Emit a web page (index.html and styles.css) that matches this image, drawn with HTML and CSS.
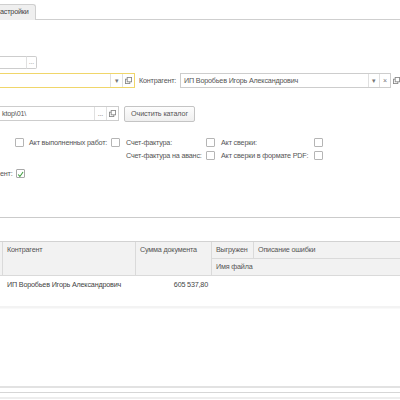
FILE: index.html
```html
<!DOCTYPE html>
<html lang="ru">
  <head>
    <meta charset="UTF-8" />
    <title>Выгрузка документов</title>
    <link rel="stylesheet" href="styles.css">
  </head>
  <body>
    <div class="tabbar">
      <div class="tab">астройки</div>
    </div>

    <div class="form">
      <div class="row row-1">
        <div class="field w-path-short"><span class="val"></span></div>
        <div class="btn-side">...</div>
      </div>

      <div class="row row-2">
        <div class="field field-active w-org">
          <span class="val"></span>
          <span class="fbtn">&#9662;</span>
          <span class="fbtn"><svg viewBox="0 0 8 8" width="7" height="7"><rect x="0.5" y="2.5" width="5" height="5" fill="none" stroke="#888"/><rect x="2.5" y="0.5" width="5" height="5" fill="#fff" stroke="#888"/></svg></span>
        </div>
        <span class="label label-k">Контрагент:</span>
        <div class="field w-kontr">
          <span class="val">ИП Воробьев Игорь Александрович</span>
          <span class="fbtn">&#9662;</span>
          <span class="fbtn">&times;</span>
        </div>
        <span class="open-icon"><svg viewBox="0 0 8 8" width="7" height="7"><rect x="0.5" y="2.5" width="5" height="5" fill="none" stroke="#888"/><rect x="2.5" y="0.5" width="5" height="5" fill="#fff" stroke="#888"/></svg></span>
      </div>

      <div class="row row-3">
        <div class="field w-path">
          <span class="val">ktop\01\</span>
          <span class="fbtn">...</span>
          <span class="fbtn"><svg viewBox="0 0 8 8" width="7" height="7"><rect x="0.5" y="2.5" width="5" height="5" fill="none" stroke="#888"/><rect x="2.5" y="0.5" width="5" height="5" fill="#fff" stroke="#888"/></svg></span>
        </div>
        <button class="btn">Очистить каталог</button>
      </div>

      <div class="checks">
        <div class="check-row">
          <span class="cb cb-first"></span>
          <span class="cl cl-akt">Акт выполненных работ:</span>
          <span class="cb"></span>
          <span class="cl cl-sf">Счет-фактура:</span>
          <span class="cb"></span>
          <span class="cl cl-sv">Акт сверки:</span>
          <span class="cb"></span>
        </div>
        <div class="check-row check-row-2">
          <span class="cl cl-sf">Счет-фактура на аванс:</span>
          <span class="cb"></span>
          <span class="cl cl-sv">Акт сверки в формате PDF:</span>
          <span class="cb"></span>
        </div>
        <div class="check-row check-row-3">
          <span class="cl">ент:</span>
          <span class="cb checked"><svg viewBox="0 0 9 9" width="9" height="9"><path d="M1.5 4.5 L3.7 7 L7.8 1.2" fill="none" stroke="#3a9a3a" stroke-width="1.3"/></svg></span>
        </div>
      </div>
    </div>

    <div class="divider"></div>

    <div class="grid">
      <div class="gh gh-lead"></div>
      <div class="gh gh-kontr">Контрагент</div>
      <div class="gh gh-sum">Сумма документа</div>
      <div class="gh">Выгружен</div>
      <div class="gh gh-err">Описание ошибки</div>
      <div class="gh gh-file">Имя файла</div>

      <div class="gc"></div>
      <div class="gc">ИП Воробьев Игорь Александрович</div>
      <div class="gc gc-num">605 537,80</div>
      <div class="gc gc-rest"></div>
    </div>

    <div class="grid-bottom"></div>

    <div class="footer">
      <div class="fline fline-1"></div>
      <div class="fline fline-2"></div>
      <div class="fline fline-3"></div>
    </div>
  </body>
</html>
```

FILE: styles.css
```css
* {
  box-sizing: border-box;
}

body {
  margin: 0;
  width: 400px;
  height: 400px;
  overflow: hidden;
  background: #fff;
  font-family: "Liberation Sans", Arial, sans-serif;
  font-size: 7.2px;
  letter-spacing: -0.18px;
  color: #555;
}

/* tabs */

.tabbar {
  height: 20px;
  padding-top: 4px;
  border-bottom: 1px solid #cfcfcf;
  display: flex;
}

.tab {
  width: 36px;
  height: 16px;
  line-height: 14px;
  background: #efefef;
  border: 1px solid #cfcfcf;
  border-left: none;
  border-bottom: none;
  border-radius: 0 3px 0 0;
  color: #444;
}

/* form */

.form {
  padding-top: 36px;
}

.row {
  display: flex;
  align-items: center;
  white-space: nowrap;
}

.row-1 {
  height: 13px;
}

.row-2 {
  margin-top: 4px;
  height: 15px;
}

.row-3 {
  margin-top: 18px;
  height: 15px;
}

.field {
  display: flex;
  height: 100%;
  border: 1px solid #cdcdcd;
  background: #fff;
  margin-left: -2px;
}

.field .val {
  flex: 1;
  padding-left: 3px;
  line-height: 13px;
  white-space: nowrap;
  overflow: hidden;
}

.fbtn {
  width: 12px;
  border-left: 1px solid #e0e0e0;
  display: flex;
  align-items: center;
  justify-content: center;
  color: #777;
  font-size: 7px;
}

.field-active {
  border-color: #f0d66a;
}

.w-path-short {
  width: 29px;
}

.btn-side {
  width: 11px;
  height: 100%;
  border: 1px solid #cdcdcd;
  border-left-color: #e0e0e0;
  border-radius: 0 2px 2px 0;
  margin-left: -1px;
  color: #999;
  font-size: 7px;
  text-align: center;
  line-height: 9px;
}

.w-org {
  width: 137px;
}

.label-k {
  margin-left: 4px;
  width: 41px;
}

.w-kontr {
  width: 211px;
  margin-left: 0;
}

.w-kontr .fbtn {
  width: 11px;
}

.open-icon {
  margin-left: 2px;
  display: flex;
  align-items: center;
}

.w-path {
  width: 121px;
}

.btn {
  margin-left: 5px;
  width: 71px;
  height: 16px;
  padding: 0;
  font-family: inherit;
  font-size: 7.2px;
  letter-spacing: -0.1px;
  color: #555;
  background: linear-gradient(#fdfdfd, #efefef);
  border: 1px solid #c4c4c4;
  border-radius: 2px;
}

/* flags */

.checks {
  margin-top: 17px;
}

.check-row {
  display: flex;
  align-items: center;
  height: 9px;
  white-space: nowrap;
}

.check-row-2 {
  margin-top: 4px;
  padding-left: 126px;
}

.check-row-3 {
  margin-top: 9px;
}

.cl {
  flex: none;
}

.cb {
  flex: none;
  width: 9px;
  height: 9px;
  border: 1px solid #b5b5b5;
  border-radius: 1px;
  background: #fff;
  display: flex;
}

.cb-first {
  margin-left: 15px;
  margin-right: 5px;
}

.cb.checked {
  margin-left: 3px;
  border-color: #a8a8a8;
}

.cl-akt {
  width: 82px;
}

.cl-sf {
  width: 80px;
}

.check-row:first-child .cl-sf {
  margin-left: 6px;
}

.cl-sv {
  margin-left: 6px;
  width: 93px;
}

/* table */

.divider {
  margin-top: 39px;
  border-top: 1px solid #cbcbcb;
}

.grid {
  margin-top: 23px;
  display: grid;
  grid-template-columns: 3px 133px 76px 42px 1fr;
  grid-template-rows: 17px 17px 17px;
  border-top: 1px solid #d2d2d2;
}

.gh {
  background: #f2f2f2;
  border-right: 1px solid #dadada;
  border-bottom: 1px solid #dadada;
  padding: 3px 4px 0;
  white-space: nowrap;
}

.gh-lead,
.gh-kontr,
.gh-sum {
  grid-row: span 2;
}

.gh-lead {
  padding: 0;
}

.gh-err {
  border-right: none;
}

.gh-file {
  grid-column: 4 / 6;
  border-right: none;
}

.gc {
  padding: 4px 4px 0;
  color: #444;
  white-space: nowrap;
}

.gc-num {
  text-align: right;
}

.gc-rest {
  grid-column: 4 / 6;
}

.grid-bottom {
  margin-top: 13px;
  height: 3px;
  background: #f3f3f3;
  border-bottom: 1px solid #f9f9f9;
}

/* bottom panel */

.footer {
  margin-top: 77px;
}

.fline {
  border-top: 2px solid #e2e2e2;
}

.fline-2 {
  margin-top: 4px;
  border-top: 1px solid #d6d6d6;
}

.fline-3 {
  margin-top: 4px;
  border-top: 2px solid #ededed;
}
```
